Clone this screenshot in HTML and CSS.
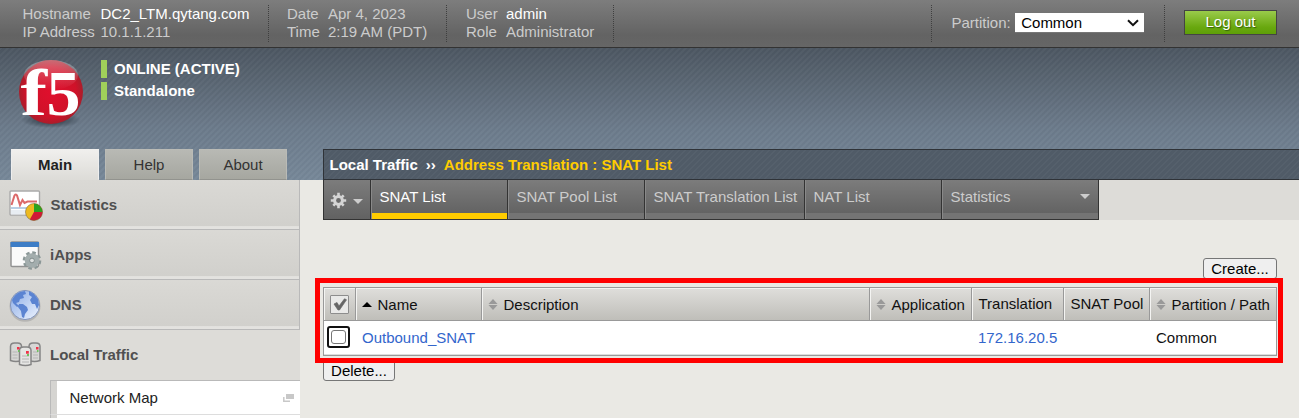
FILE: index.html
```html
<!DOCTYPE html>
<html lang="en">
<head>
<meta charset="utf-8">
<title>SNAT List</title>
<link rel="stylesheet" href="styles.css">
</head>
<body>
<header class="topbar">
  <dl class="info host"><dt>Hostname</dt><dd class="strong">DC2_LTM.qytang.com</dd><dt>IP Address</dt><dd>10.1.1.211</dd></dl>
  <dl class="info clock"><dt>Date</dt><dd>Apr 4, 2023</dd><dt>Time</dt><dd>2:19 AM (PDT)</dd></dl>
  <dl class="info user"><dt>User</dt><dd class="strong">admin</dd><dt>Role</dt><dd>Administrator</dd></dl>
  <div class="partition">
    <span>Partition:</span>
    <div class="select"><span>Common</span>
      <svg width="12" height="8" viewBox="0 0 12 8"><path d="M1 1.2 6 6.2 11 1.2" fill="none" stroke="#111" stroke-width="2"/></svg>
    </div>
  </div>
  <button class="logout">Log out</button>
</header>

<div class="workspace">
  <aside class="sidebar">
    <div class="brand">
      <svg class="logo" width="70" height="76" viewBox="0 0 70 76">
        <defs>
          <radialGradient id="ball" cx=".5" cy=".5" r=".56"><stop offset="0" stop-color="#e00f2d"/><stop offset=".7" stop-color="#cf1229"/><stop offset="1" stop-color="#94242c"/></radialGradient>
          <linearGradient id="shine" x2="0" y2="1"><stop offset="0" stop-color="#fff" stop-opacity=".35"/><stop offset="1" stop-color="#fff" stop-opacity="0"/></linearGradient>
          <radialGradient id="shade"><stop offset="0" stop-color="#222c36" stop-opacity=".95"/><stop offset="1" stop-color="#222c36" stop-opacity="0"/></radialGradient>
        </defs>
        <ellipse cx="35" cy="64" rx="30" ry="8" fill="url(#shade)"/>
        <circle cx="35" cy="36" r="32" fill="url(#ball)"/>
        <ellipse cx="35" cy="19" rx="27" ry="15" fill="url(#shine)"/>
        <g transform="translate(4.500 58.500) scale(1.330 1.080)"><text class="logo-f">f</text></g>
        <g transform="translate(30.500 58.500) scale(1.080 1)"><text class="logo-5">5</text></g>
      </svg>
      <div class="status"><div>ONLINE (ACTIVE)</div><div>Standalone</div></div>
    </div>
    <nav class="side-tabs"><a class="active">Main</a><a>Help</a><a>About</a></nav>
    <ul class="menu">
      <li><svg class="icon" width="36" height="36" viewBox="0 0 36 36">
        <rect x="2" y="3" width="29.500" height="24" rx="1" fill="#fff" stroke="#aaa" stroke-width="1.4"/>
        <path d="M3 19h28v2H3z" fill="#b9cfe5"/><path d="M3 22h28v4.500H3z" fill="#e8edf2"/>
        <path d="M3.500 17 6.500 7.500q1.500-2 2.500 0l3 9.500 2.500-5 2 3 3-1.500H29" fill="none" stroke="#dc6a6a" stroke-width="2"/>
        <circle cx="26" cy="24" r="8.500" fill="#edba20"/><path d="M26 24V15.500a8.500 8.500 0 0 1 8.500 8.500z" fill="#2aa31e"/><path d="M26 24h8.500a8.500 8.500 0 0 1-12.700 7.400z" fill="#d01836"/>
        <circle cx="26" cy="24" r="8.500" fill="none" stroke="#6e5c36" stroke-opacity=".5"/>
      </svg><span class="nudge">Statistics</span></li>
      <li><svg class="icon" width="36" height="36" viewBox="0 0 36 36">
        <rect x="3" y="4" width="27.500" height="24.500" rx="1" fill="#fafafa" stroke="#929292" stroke-width="1.500"/><path d="M2.500 4h28.500v5h-28.500z" fill="#3d7dc6"/>
        <circle cx="24" cy="22.500" r="7.800" fill="none" stroke="#8b9797" stroke-width="3" stroke-dasharray="3.500 2.626"/>
        <circle cx="24" cy="22.500" r="5" fill="#c5cccc" stroke="#a3adad" stroke-width="4.500"/><circle cx="24" cy="22.500" r="2.400" fill="#dde0df" stroke="#7b8787"/>
      </svg><span>iApps</span></li>
      <li><svg class="icon" width="36" height="36" viewBox="0 0 36 36">
        <defs><linearGradient id="sea" x2="1" y2="1"><stop offset="0" stop-color="#8aabe5"/><stop offset="1" stop-color="#eef4ff"/></linearGradient></defs>
        <circle cx="17" cy="18.200" r="15.500" fill="#999" opacity=".5"/>
        <circle cx="17" cy="17" r="14.600" fill="url(#sea)" stroke="#8596bb"/>
        <path d="M4 12q3-6 8-8l5-1 1 3-3 1 1 3-4 1-1 3-3 1 3 3-2 1-4-4zM11 16l4 0 4 3 1 3-3 4-1 4-2-1-1-6-3-4zM21 3l5 3 4 5 1 6-2 4-2-5-3 0-2-4 2-3-3-2z" fill="#5b84d2"/>
      </svg><span>DNS</span></li>
      <li class="open"><svg class="icon" width="36" height="36" viewBox="0 0 36 36">
        <g fill="#d7d7d5" stroke="#858585" stroke-width="1.500"><path d="M2.500 22.500V8.500q0-3.500 4-3.500h3q4 0 4 3.500v14q-5.500 2-11 0zM21 22.500V8.500q0-3.500 4-3.500h3q4 0 4 3.500v14q-5.500 2-11 0z"/><path d="M11.500 26.500V12.500q0-3.500 4-3.500h3.500q4 0 4 3.500v14q-5.500 2-11.500 0z" fill="#e5e5e3"/></g>
        <path d="M4.500 14h5m-5 3h5m-5 3h5M25 14h5m-5 3h5m-5 3h5M14 18h7m-7 3h7m-7 3h7" stroke="#b5b5b5"/>
        <path d="M9 9h2.500v2.500H9zM28 9h2.500v2.500h-2.500zM18 13h2.800v2.800H18z" fill="#ef3348"/><path d="M10 12h1.500v2H10zM29 12h1.500v2H29zM19 16h2v2h-2z" fill="#6dc35f"/>
      </svg><span>Local Traffic</span></li>
    </ul>
    <div class="submenu"><a>Network Map
      <svg width="11" height="9" viewBox="0 0 11 9"><path d="M3 0h8v5H3z" fill="#c8c8c8"/><path d="M.8 3v4.300H7" fill="none" stroke="#c8c8c8" stroke-width="1.500"/></svg></a><a></a></div>
  </aside>

  <main class="content">
    <h1 class="crumbs"><span>Local Traffic</span><span class="sep">››</span><em>Address Translation : SNAT List</em></h1>
    <div class="tab-strip">
      <nav class="tabs">
        <a class="gear"><svg width="17" height="17" viewBox="0 0 17 17"><g stroke="#d4d4d4" stroke-width="2.600"><path d="M8.500 .8v15.400M.8 8.500h15.400M3.300 3.300l10.400 10.400M13.700 3.300 3.300 13.700"/></g><circle cx="8.500" cy="8.500" r="5.400" fill="#d4d4d4"/><circle cx="8.500" cy="8.500" r="2.400" fill="#6a6a6a"/></svg><i class="caret"></i></a>
        <a class="current">SNAT List</a><a class="pool">SNAT Pool List</a><a class="trans">SNAT Translation List</a><a class="nat">NAT List</a><a class="stats">Statistics<i class="caret"></i></a>
      </nav>
    </div>
    <div class="listing">
      <div class="actions"><button class="btn create">Create...</button></div>
      <div class="table-wrap">
        <table class="grid">
          <colgroup><col class="c-check"><col class="c-name"><col class="c-desc"><col class="c-app"><col class="c-tran"><col class="c-pool"><col class="c-part"></colgroup>
          <thead><tr>
            <th><div class="check-all"><svg width="14" height="13" viewBox="0 0 14 13"><path d="m1 6 3-1.500L6 8 11.500.8l2 1L6.500 12H5z" fill="#666" stroke="#666" stroke-width=".7"/></svg></div></th>
            <th><div class="head"><i class="up"></i>Name</div></th>
            <th><div class="head"><i class="sort"></i>Description</div></th>
            <th><div class="head"><i class="sort"></i>Application</div></th>
            <th><div class="head plain">Translation</div></th>
            <th><div class="head plain">SNAT Pool</div></th>
            <th><div class="head"><i class="sort"></i>Partition / Path</div></th>
          </tr></thead>
          <tbody><tr><td><div class="check"><span></span></div></td><td><a>Outbound_SNAT</a></td><td></td><td></td><td><a>172.16.20.5</a></td><td></td><td>Common</td></tr></tbody>
        </table>
        <div class="highlight"></div>
      </div>
      <button class="btn delete">Delete...</button>
    </div>
  </main>
</div>
</body>
</html>
```
FILE: styles.css
```css
* { box-sizing: border-box; }
body { margin: 0; height: 418px; background: #eae9e4; font: 15px/18px "Liberation Sans", Arial, sans-serif; color: #111; }
svg { display: block; flex: none; }
button { font: inherit; padding: 0; }

.topbar { display: flex; height: 48px; padding-top: 5px; background: linear-gradient(#7d7d7d, #636363 75%, #666); border-bottom: 1px solid #333; color: #ccc; }
.info { display: grid; grid-template-rows: 18px 18px; align-content: start; height: 37px; margin: 0; border-right: 1px dotted #3f3f3f; white-space: nowrap; }
.info dd { margin: 0; }
.info .strong { color: #fff; }
.host { width: 269px; padding-left: 22.5px; grid-template-columns: 78px 1fr; }
.clock { width: 178px; padding-left: 18px; grid-template-columns: 41px 1fr; }
.user { width: 167px; padding-left: 19px; grid-template-columns: 40px 1fr; }
.partition { display: flex; width: 234px; height: 37px; margin-left: auto; padding: 7px 0 0 19.5px; gap: 4.5px; border: 1px dotted #3f3f3f; border-width: 0 1px; line-height: 21px; }
.select { display: flex; align-items: center; justify-content: space-between; width: 129px; height: 20px; margin-top: 1px; padding: 0 5px 0 6px; background: #fff; border: 1px solid #767676; border-width: 0 0 1px; color: #000; }
.logout { width: 93px; height: 25px; margin: 5px 22px 0 19px; padding-bottom: 2px; background: linear-gradient(#9acb4b, #69a80f 70%, #5e9f08); border: 1px solid #444; color: #fff; text-shadow: 1px 1px 1px #35600a; }

.workspace { display: flex; height: 370px; background:
  repeating-linear-gradient(135deg, rgba(255,255,255,.025) 0 2.121px, rgba(0,0,0,.025) 2.121px 4.243px) 0 0 / 100% 132px no-repeat,
  linear-gradient(#4d5762, #6c7b8b 60%, #778899) 0 0 / 100% 132px no-repeat; }
.sidebar { width: 300px; flex: none; }
.brand { display: flex; height: 101px; padding: 8px 0 0 16px; }
.logo-f, .logo-5 { font: bold 60px "Liberation Serif", serif; fill: #fff; }
.logo-5 { font-size: 63px; }
.status { display: flex; flex-direction: column; gap: 4px; padding: 4px 0 0 15px; color: #fff; font-weight: bold; }
.status div { height: 18px; padding-left: 7px; border-left: 6px solid #a0d05a; line-height: 18px; white-space: nowrap; }
.side-tabs { display: flex; gap: 6px; height: 31px; padding-left: 11px; }
.side-tabs a { width: 88px; background: linear-gradient(#b8b9b4, #a6a7a0); border: 1px solid #babbb6; border-bottom-color: #92938e; line-height: 30px; text-align: center; color: #333; }
.side-tabs .active { background: linear-gradient(#f0efed, #dddcd8); border-color: #f2f1ee #eee #dddcd8; font-weight: bold; color: #222; }
.menu { margin: 0; padding: 0; list-style: none; }
.menu li { display: flex; height: 50px; padding-left: 8px; gap: 6px; background: linear-gradient(#dad9d5, #d1d0cc 94%, #e3e2df 95%); border: 1px solid #b9b9b9; border-width: 0 1px 1px 0; font-weight: bold; color: #505050; line-height: 50px; }
.menu .open { background: #dddcd8; border-color: #dddcd8; }
.icon { margin-top: 8px; }
.menu .nudge { margin-left: .5px; }
.submenu { height: 38px; padding-left: 50px; background: #dddcd8; }
.submenu a { display: flex; align-items: center; justify-content: space-between; height: 35px; padding: 1px 6px 0 18.5px; background: #fff; border: solid #b9b9b9; border-width: 1px 0 1px 1px; border-bottom-color: #ddd; box-shadow: inset 6px 0 #d5d4d1; color: #222; }
.submenu a + a { height: 3px; padding: 0; border-width: 0 0 0 1px; }

.content { flex: 1; padding: 101px 0 0 23px; }
.crumbs { display: flex; height: 31px; margin: 0; padding-left: 5.5px; background: repeating-linear-gradient(135deg, rgba(255,255,255,.03) 0 2px, transparent 2px 4.243px), #505b67; border: 1px solid #2f3338; border-right: 0; font: bold 15px/30px "Liberation Sans", Arial, sans-serif; color: #fff; white-space: nowrap; }
.sep { margin: 0 8px; }
.crumbs em { color: #fc0; font-style: normal; }
.tab-strip { height: 40px; background: #dddcd8; }
.tabs { display: flex; width: 776px; height: 40px; border: 1px solid #333; border-width: 0 1px 1px; background: #333; }
.tabs a { display: flex; justify-content: space-between; padding-left: 8.5px; background: linear-gradient(#7c7c7c, #636363 33px, #747474 33px); border: 1px solid #333; border-width: 0 0 0 1px; box-shadow: inset 1px 0 #898989; line-height: 34px; color: #ccc; white-space: nowrap; }
.tabs .gear { width: 46px; padding: 12px 7px 0 6px; border-left: 0; box-shadow: none; background: linear-gradient(#7c7c7c, #626262); }
.tabs .current { width: 137px; background: linear-gradient(#7c7c7c, #636363 33px, #fc0 33px); color: #fff; }
.pool { width: 137px; }
.trans { width: 160px; }
.nat { width: 137px; }
.tabs .stats { flex: 1; }
.caret { border: 5px solid transparent; border-top-color: #ccc; border-bottom: 0; height: 5px; width: 10px; }
.gear .caret { margin-top: 7px; }
.stats .caret { margin: 14px 8px 0 0; }

.listing { padding: 38px 22px 0 0; background: #eae9e4; height: 198px; }
.actions { display: flex; justify-content: flex-end; height: 29px; }
.btn { display: block; height: 21px; background: #efefef; border: 1px solid #767676; border-radius: 3px; color: #000; line-height: 19px; }
.create { width: 74px; }
.delete { width: 72px; margin-top: 4px; }
.table-wrap { position: relative; }
.grid { width: 954px; height: 69px; table-layout: fixed; border-collapse: separate; border-spacing: 0; border: 1px solid #999; background: #fff; }
.c-check { width: 32px; } .c-name { width: 126px; } .c-desc { width: 388px; } .c-app { width: 102px; } .c-tran { width: 92px; } .c-pool { width: 86px; } .c-part { width: 126px; }
.grid th { height: 33px; padding: 0; background: linear-gradient(#dfdedb, #bfbeb9); border-right: 1px solid #999; border-bottom: 1px solid #999; box-shadow: inset 1px 1px #f4f4f2; font-weight: normal; text-align: left; white-space: nowrap; }
.grid th:last-child { border-right: 0; }
.head { display: flex; align-items: center; gap: 5.5px; padding: 1px 0 0 6px; }
.head.plain { padding: 0 0 1px 6.5px; }
.grid td { height: 34px; padding: 0 0 1px 6px; box-shadow: inset 0 -1px #ddd; }
.grid td:first-child { padding: 0 0 2px 3px; }
.grid td a { color: #36c; }
.up { border: 5px solid transparent; border-bottom-color: #000; border-top: 0; width: 10px; height: 5px; }
.sort { width: 10px; height: 11px; background: linear-gradient(#999 5px, transparent 5px 6px, #999 6px); clip-path: polygon(50% 0, 100% 50%, 50% 100%, 0 50%); }
.check-all { display: flex; align-items: center; justify-content: center; width: 19px; height: 19px; margin: 1px 0 0 6px; background: #e9e9e8; border: 1px solid #8d8d8d; border-radius: 1px; }
.check { width: 23px; height: 22px; padding: 2px; border: 2px solid #111; border-radius: 3px; }
.check span { display: block; width: 15px; height: 14px; border: 1px solid #767676; border-radius: 3px; }
.highlight { position: absolute; inset: -9px -6px -7px -8px; border: 5px solid #f00; pointer-events: none; }
```
